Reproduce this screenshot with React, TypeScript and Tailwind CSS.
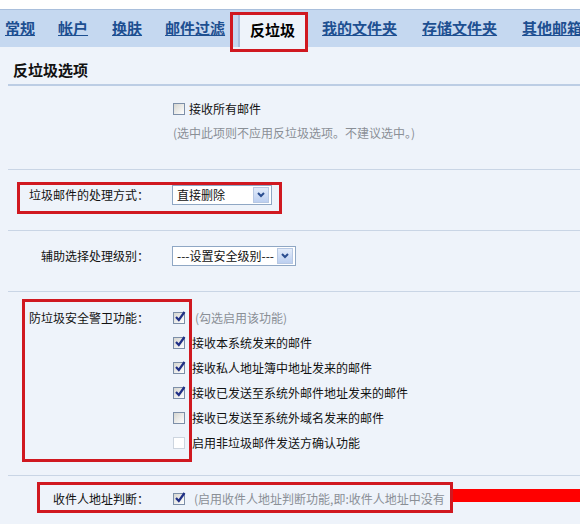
import React from 'react';

const Check = ({ checked, disabled }: { checked?: boolean; disabled?: boolean }) => (
  <span
    className={`relative inline-block w-[12px] h-[12px] shrink-0 border ${
      disabled ? 'border-[#cdd5df] bg-white' : 'border-[#7d8fa8] bg-gradient-to-br from-[#d6d6d1] to-white'
    }`}
  >
    {checked && (
      <svg className="absolute -top-[3px] left-[0px] w-[12px] h-[13px]" viewBox="0 0 12 13">
        <path d="M2 7 L4.8 10 L10.5 2" fill="none" stroke="#1f2f86" strokeWidth="2.2" />
      </svg>
    )}
  </span>
);

const Select = ({ text, width }: { text: string; width: string }) => (
  <div className={`flex items-center justify-between h-[20px] ${width} border border-[#8fa7c4] bg-white pl-[4px] pr-[2px]`}>
    <span className="text-[12px] text-[#111] leading-none whitespace-nowrap">{text}</span>
    <span className="flex items-center justify-center w-[16px] h-[16px] border border-[#b7c8e3] bg-gradient-to-b from-[#e3ecfa] to-[#bccff0]">
      <svg width="8" height="6" viewBox="0 0 8 6">
        <path d="M1 1 L4 4 L7 1" fill="none" stroke="#2a4d8f" strokeWidth="2" />
      </svg>
    </span>
  </div>
);

const RedBox = ({ cls }: { cls: string }) => (
  <div className={`absolute z-10 border-[3px] border-[#d01820] pointer-events-none ${cls}`} />
);

export default function App() {
  const guardRows = [
    { text: '接收本系统发来的邮件', checked: true },
    { text: '接收私人地址簿中地址发来的邮件', checked: true },
    { text: '接收已发送至系统外邮件地址发来的邮件', checked: true },
    { text: '接收已发送至系统外域名发来的邮件', checked: false },
    { text: '启用非垃圾邮件发送方确认功能', checked: false, disabled: true },
  ];

  return (
    <div className="w-[580px] h-[524px] overflow-hidden bg-[#eef3fa] font-['SimSun','Noto_Sans_CJK_SC',sans-serif] text-[#111]">
      {/* top strip */}
      <div className="h-[10px] bg-white border-b border-[#a9bfdc]" />

      {/* tabs */}
      <div className="flex items-center h-[37px] bg-[#c5d8f0] whitespace-nowrap text-[15px] font-bold">
        <span className="shrink-0 ml-[5px] text-[#1d4f91] underline">常规</span>
        <span className="shrink-0 ml-[23px] text-[#1d4f91] underline">帐户</span>
        <span className="shrink-0 ml-[24px] text-[#1d4f91] underline">换肤</span>
        <span className="shrink-0 ml-[23px] text-[#1d4f91] underline">邮件过滤</span>
        <div className="relative shrink-0 self-end ml-[13px] flex items-center justify-center w-[67px] h-[33px] bg-[#eef3fa] border-l-2 border-[#a8bfdd] text-black">
          反垃圾
          <RedBox cls="-left-[10px] -top-[2px] -right-[3px] -bottom-[5px]" />
        </div>
        <span className="shrink-0 ml-[17px] text-[#1d4f91] underline">我的文件夹</span>
        <span className="shrink-0 ml-[25px] text-[#1d4f91] underline">存储文件夹</span>
        <span className="shrink-0 ml-[25px] text-[#1d4f91] underline">其他邮箱</span>
      </div>

      <div className="pl-[8px]">
        {/* section title */}
        <div className="h-[39px] pl-[5px] pt-[13px] text-[15px] font-bold leading-[20px] border-b-2 border-[#bccde4]">
          反垃圾选项
        </div>

        {/* receive all */}
        <div className="h-[84px] border-b border-[#c9d5e5] pl-[165px] pt-[15px]">
          <div className="flex items-center gap-[4px] h-[16px]">
            <Check />
            <span className="text-[12px]">接收所有邮件</span>
          </div>
          <div className="mt-[8px] text-[12px] leading-[16px] text-[#8a8f96]">
            (选中此项则不应用反垃圾选项。不建议选中。)
          </div>
        </div>

        {/* handling method */}
        <div className="relative h-[61px] border-b border-[#c9d5e5] pt-[15px]">
          <div className="flex items-center h-[20px]">
            <div className="w-[141px] text-right text-[12px]">垃圾邮件的处理方式：</div>
            <div className="ml-[23px]">
              <Select text="直接删除" width="w-[100px]" />
            </div>
          </div>
          <RedBox cls="left-[9px] top-[12px] w-[265px] h-[32px]" />
        </div>

        {/* level */}
        <div className="h-[61px] border-b border-[#c9d5e5] pt-[15px]">
          <div className="flex items-center h-[20px]">
            <div className="w-[141px] text-right text-[12px]">辅助选择处理级别：</div>
            <div className="ml-[23px]">
              <Select text="---设置安全级别---" width="w-[124px]" />
            </div>
          </div>
        </div>

        {/* guard */}
        <div className="relative h-[184px] border-b border-[#c9d5e5] pt-[13px]">
          <div className="flex">
            <div className="w-[141px] text-right text-[12px] leading-[25px]">防垃圾安全警卫功能：</div>
            <div className="ml-[24px] flex flex-col">
              <div className="flex items-center h-[25px] gap-[10px]">
                <Check checked />
                <span className="text-[12px] text-[#8a8f96]">(勾选启用该功能)</span>
              </div>
              {guardRows.map((row, i) => (
                <div key={i} className="flex items-center h-[25px] gap-[7px]">
                  <Check checked={row.checked} disabled={row.disabled} />
                  <span className="text-[12px]">{row.text}</span>
                </div>
              ))}
            </div>
          </div>
          <RedBox cls="left-[14px] top-[7px] w-[170px] h-[163px]" />
        </div>

        {/* recipient */}
        <div className="relative h-[60px] pt-[13px]">
          <div className="flex items-center h-[20px] whitespace-nowrap">
            <div className="w-[141px] text-right text-[12px]">收件人地址判断：</div>
            <div className="ml-[24px] flex items-center gap-[9px]">
              <Check checked />
              <span className="text-[12px] text-[#8a8f96]">(启用收件人地址判断功能,即:收件人地址中没有</span>
            </div>
          </div>
          <div className="absolute z-10 left-[445px] top-[13px] w-[127px] h-[13px] bg-[#ff0000]" />
          <RedBox cls="left-[29px] top-[6px] w-[416px] h-[31px]" />
        </div>
      </div>
    </div>
  );
}
